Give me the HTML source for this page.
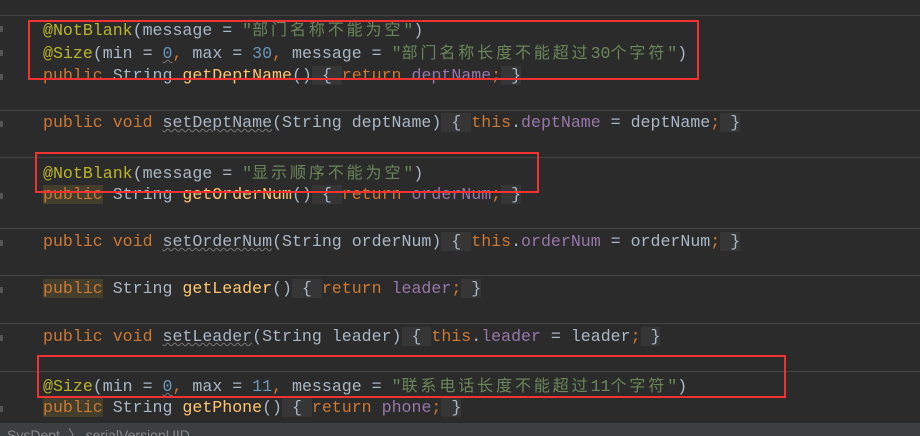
<!DOCTYPE html>
<html style="overflow:hidden;height:436px"><head><meta charset="utf-8"><style>
body{margin:0;width:920px;height:436px;background:#2b2b2b;overflow:hidden;position:relative;font-family:"Liberation Mono","Noto Sans CJK SC",monospace;font-size:16.6px;color:#a9b7c6}
.l{position:absolute;left:43px;white-space:pre;line-height:20px}
.k{color:#cc7832}.a{color:#bbb529}.s{color:#6a8759}.n{color:#6897bb}.m{color:#ffc66d}.f{color:#9876aa}
.c{font-family:"Noto Sans CJK SC",sans-serif;font-size:16px;letter-spacing:2.9px}
.b{background:#363636}.h{background:#433f2c}
.u{text-decoration:underline wavy #777;text-decoration-thickness:1px}
.sep{position:absolute;left:0;width:920px;height:1px;background:#434343}
.g{position:absolute;left:0;width:3px;height:6px;background:#555}
.box{position:absolute;border:2.5px solid #f03232}
.bar{position:absolute;left:0;top:423px;width:920px;height:13px;overflow:hidden;background:#3c3f41;color:#888;font-family:"Liberation Sans",sans-serif;font-size:14px;line-height:24px;padding-left:7px;box-sizing:border-box}
</style></head><body>
<div class="sep" style="top:15px"></div><div class="sep" style="top:110px"></div><div class="sep" style="top:157px"></div><div class="sep" style="top:228px"></div><div class="sep" style="top:275px"></div><div class="sep" style="top:323px"></div><div class="sep" style="top:371px"></div>
<div class="g" style="top:26px"></div><div class="g" style="top:50px"></div><div class="g" style="top:74px"></div><div class="g" style="top:121px"></div><div class="g" style="top:193px"></div><div class="g" style="top:240px"></div><div class="g" style="top:287px"></div><div class="g" style="top:335px"></div><div class="g" style="top:406px"></div>
<div class="l" style="top:18px"><span class="a">@NotBlank</span>(message = <span class="s">"<span class="c">部门名称不能为空</span>"</span>)</div>
<div class="l" style="top:41px"><span class="a">@Size</span>(min = <span class="n u">0</span><span class="k">,</span> max = <span class="n">30</span><span class="k">,</span> message = <span class="s">"<span class="c">部门名称长度不能超过</span>30<span class="c">个字符</span>"</span>)</div>
<div class="l" style="top:66px"><span class="k">public</span> String <span class="m">getDeptName</span>()<span class="b"> { </span><span class="k">return</span> <span class="f">deptName</span><span class="k">;</span><span class="b"> }</span></div>
<div class="l" style="top:113px"><span class="k">public void</span> <span class="u">setDeptName</span>(String deptName)<span class="b"> { </span><span class="k">this</span>.<span class="f">deptName</span> = deptName<span class="k">;</span><span class="b"> }</span></div>
<div class="l" style="top:161px"><span class="a">@NotBlank</span>(message = <span class="s">"<span class="c">显示顺序不能为空</span>"</span>)</div>
<div class="l" style="top:185px"><span class="k h">public</span> String <span class="m">getOrderNum</span>()<span class="b"> { </span><span class="k">return</span> <span class="f">orderNum</span><span class="k">;</span><span class="b"> }</span></div>
<div class="l" style="top:232px"><span class="k">public void</span> <span class="u">setOrderNum</span>(String orderNum)<span class="b"> { </span><span class="k">this</span>.<span class="f">orderNum</span> = orderNum<span class="k">;</span><span class="b"> }</span></div>
<div class="l" style="top:279px"><span class="k h">public</span> String <span class="m">getLeader</span>()<span class="b"> { </span><span class="k">return</span> <span class="f">leader</span><span class="k">;</span><span class="b"> }</span></div>
<div class="l" style="top:327px"><span class="k">public void</span> <span class="u">setLeader</span>(String leader)<span class="b"> { </span><span class="k">this</span>.<span class="f">leader</span> = leader<span class="k">;</span><span class="b"> }</span></div>
<div class="l" style="top:374px"><span class="a">@Size</span>(min = <span class="n u">0</span><span class="k">,</span> max = <span class="n">11</span><span class="k">,</span> message = <span class="s">"<span class="c">联系电话长度不能超过</span>11<span class="c">个字符</span>"</span>)</div>
<div class="l" style="top:398px"><span class="k h">public</span> String <span class="m">getPhone</span>()<span class="b"> { </span><span class="k">return</span> <span class="f">phone</span><span class="k">;</span><span class="b"> }</span></div>
<div class="bar">SysDept &nbsp;〉 serialVersionUID</div>
<div class="box" style="left:28px;top:20px;width:667px;height:56px"></div>
<div class="box" style="left:35px;top:152px;width:500px;height:37px"></div>
<div class="box" style="left:37px;top:355px;width:745px;height:39px"></div>
</body></html>
